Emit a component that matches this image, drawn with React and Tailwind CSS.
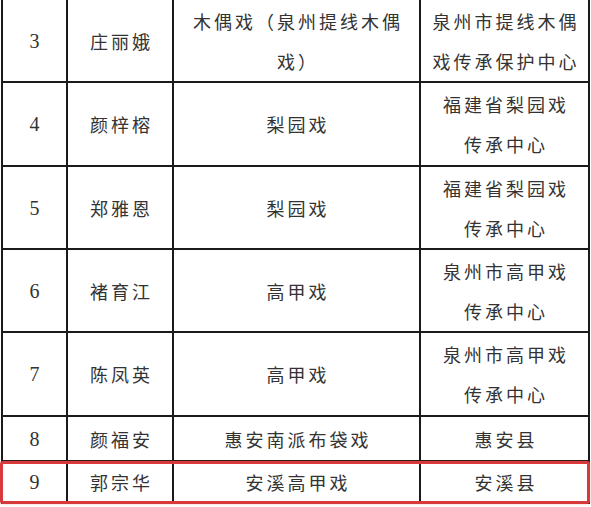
import React from 'react';

const rows = [
    { no: '3', name: '庄丽娥', item: ['木偶戏（泉州提线木偶', '戏）'], unit: ['泉州市提线木偶', '戏传承保护中心'], h: 'h-[83px]' },
    { no: '4', name: '颜梓榕', item: ['梨园戏'], unit: ['福建省梨园戏', '传承中心'], h: 'h-[84px]' },
    { no: '5', name: '郑雅恩', item: ['梨园戏'], unit: ['福建省梨园戏', '传承中心'], h: 'h-[83px]' },
    { no: '6', name: '褚育江', item: ['高甲戏'], unit: ['泉州市高甲戏', '传承中心'], h: 'h-[83px]' },
    { no: '7', name: '陈凤英', item: ['高甲戏'], unit: ['泉州市高甲戏', '传承中心'], h: 'h-[84px]' },
    { no: '8', name: '颜福安', item: ['惠安南派布袋戏'], unit: ['惠安县'], h: 'h-[45px]' },
    { no: '9', name: '郭宗华', item: ['安溪高甲戏'], unit: ['安溪县'], h: 'h-[41px]' },
];

const cell = 'border-2 border-[#1a1a1a] text-center align-middle p-0';

const Lines = ({ lines }) => (
    <div className="flex flex-col items-center">
        {lines.map((l, i) => (
            <span key={i} className="leading-[40px] tracking-[3px] pl-[3px]">{l}</span>
        ))}
    </div>
);

export default function App() {
    return (
        <div className="relative w-[591px] h-[507px] overflow-hidden bg-white">
            <table
                className="table-fixed border-collapse -mt-[2px] ml-[1px] text-[#333] text-[18px]"
                style={{ fontFamily: '"Noto Sans CJK SC", "Noto Sans", sans-serif', width: 588 }}
            >
                <colgroup>
                    <col className="w-[65px]" />
                    <col className="w-[106px]" />
                    <col className="w-[247px]" />
                    <col className="w-[169px]" />
                </colgroup>
                <tbody>
                    {rows.map((r) => (
                        <tr key={r.no} className={r.h}>
                            <td className={`${cell} text-[20px]`} style={{ fontFamily: '"Liberation Serif", serif' }}>{r.no}</td>
                            <td className={cell}><Lines lines={[r.name]} /></td>
                            <td className={cell}><Lines lines={r.item} /></td>
                            <td className={cell}><Lines lines={r.unit} /></td>
                        </tr>
                    ))}
                </tbody>
            </table>

            {/* red highlight round the last row */}
            <div className="absolute left-0 top-[461px] w-[590px] h-[43px] border-[3px] border-[#d8393a] rounded-[3px] shadow-[0_0_2px_rgba(216,57,58,0.4)]" />
        </div>
    );
}
